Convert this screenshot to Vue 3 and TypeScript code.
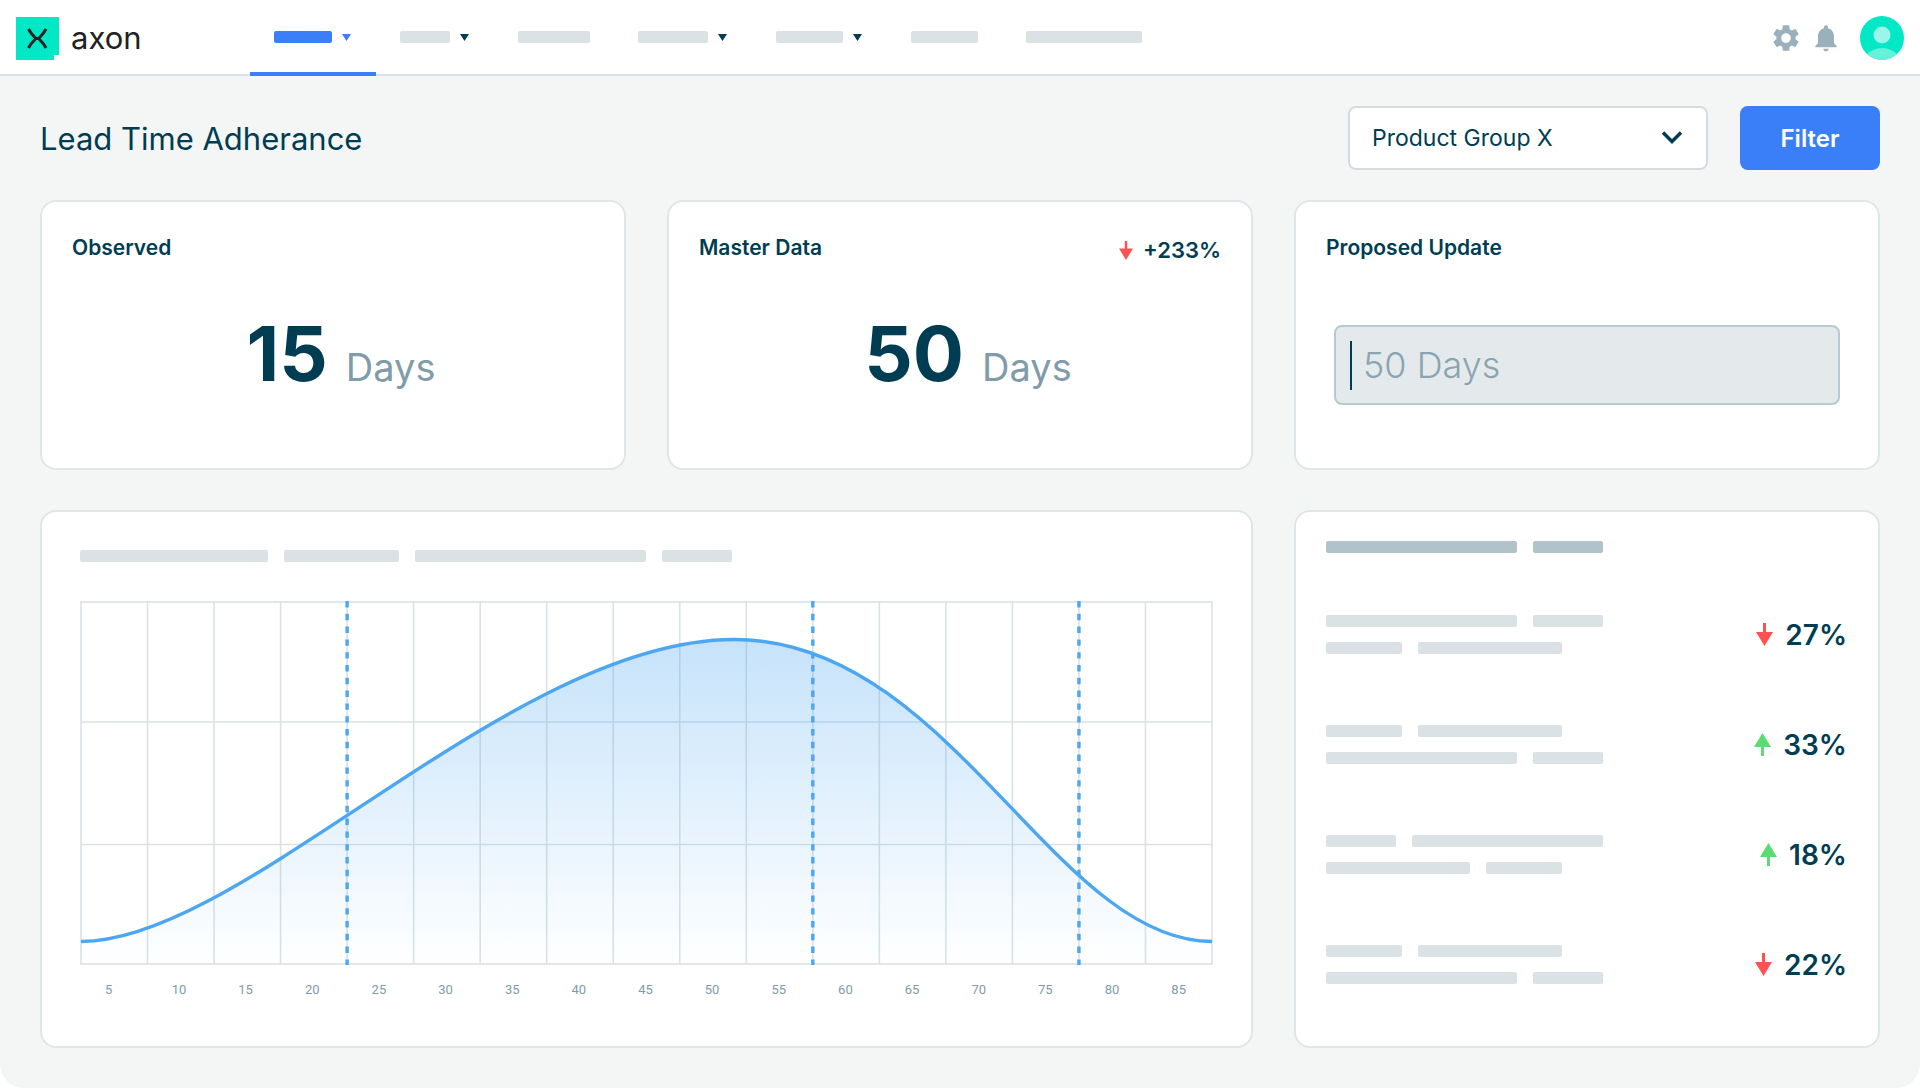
<script setup lang="ts">
import { ref } from 'vue'

interface NavItem {
  label: string
  width: number
  menu: boolean
  active?: boolean
}

interface ChangeRow {
  lines: number[][]
  direction: 'up' | 'down'
  value: string
}

const navItems: NavItem[] = [
  { label: 'Overview', width: 58, menu: true, active: true },
  { label: 'Plans', width: 50, menu: true },
  { label: 'Reports', width: 72, menu: false },
  { label: 'Materials', width: 70, menu: true },
  { label: 'Suppliers', width: 67, menu: true },
  { label: 'Orders', width: 67, menu: false },
  { label: 'Administration', width: 116, menu: false },
]

const changes: ChangeRow[] = [
  { lines: [[191, 70], [76, 144]], direction: 'down', value: '27%' },
  { lines: [[76, 144], [191, 70]], direction: 'up', value: '33%' },
  { lines: [[70, 191], [144, 76]], direction: 'up', value: '18%' },
  { lines: [[76, 144], [191, 70]], direction: 'down', value: '22%' },
]

const group = ref('Product Group X')
const proposed = ref('')

const chartTitle = [188, 115, 231, 70]
const columns = 17
const columnStep = 1131 / columns
const gridX = Array.from({ length: columns - 1 }, (_, i) => 1 + (i + 1) * columnStep)
const gridY = [121, 243.5]
const markers = [4, 11, 15].map((n) => 1 + n * columnStep)
const axisLabels = Array.from({ length: columns }, (_, i) => (i + 1) * 5)

const curve = 'M1 340.5C164 340.5 431 38.500 654 38.500C870 38.500 974 340.500 1132 340.500'
const area = `${curve}V363H1Z`

const arrowPaths = {
  down: 'M7 0h3v9h7L8.500 23 0 9h7z',
  up: 'M8.500 0 17 14h-7v9H7v-9H0z',
}
</script>

<template>
  <div class="page">
    <header class="topbar">
      <a class="brand" href="#">
        <svg class="brand-mark" width="43" height="43" viewBox="0 0 43 43" aria-hidden="true">
          <path fill="#00e8c6" d="M0 0h43v38h-5v5H0z" />
          <path
            fill="none"
            stroke="#222"
            stroke-width="3"
            d="M12.500 12c4 7.500 7 8 7 9.500s-3 2-7 9.500M30 12c-4 7.500-7 8-7 9.500s3 2 7 9.500M19.500 21.500H23"
          />
        </svg>
        <span class="brand-name">axon</span>
      </a>
      <nav class="nav" aria-label="Main">
        <a
          v-for="item in navItems"
          :key="item.label"
          href="#"
          class="nav-item"
          :class="{ active: item.active }"
          :aria-label="item.label"
        >
          <span class="bar" :style="{ width: item.width + 'px' }"></span>
          <svg v-if="item.menu" width="10" height="7" viewBox="0 0 10 7" aria-hidden="true">
            <path d="M0 0h9L4.500 7z" fill="currentColor" />
          </svg>
        </a>
      </nav>
      <div class="tools">
        <button type="button" class="icon-button" aria-label="Settings">
          <svg width="32" height="32" viewBox="0 0 24 24" aria-hidden="true">
            <path
              fill="currentColor"
              d="M19.140 12.940c.04-.3.06-.61.06-.94 0-.32-.02-.64-.07-.94l2.030-1.580c.18-.14.23-.41.12-.61l-1.920-3.320c-.12-.22-.37-.29-.59-.22l-2.390.96c-.5-.38-1.030-.7-1.620-.94l-.36-2.540c-.04-.24-.24-.41-.48-.41h-3.840c-.24 0-.43.17-.47.41l-.36 2.540c-.59.24-1.130.57-1.620.94l-2.390-.96c-.22-.08-.47 0-.59.22L2.740 8.870c-.12.21-.08.47.12.61l2.030 1.580c-.05.3-.09.63-.09.94s.02.64.07.94l-2.030 1.580c-.18.14-.23.41-.12.61l1.920 3.320c.12.22.37.29.59.22l2.390-.96c.5.38 1.030.7 1.620.94l.36 2.540c.05.24.24.41.48.41h3.840c.24 0 .44-.17.47-.41l.36-2.540c.59-.24 1.130-.56 1.620-.94l2.390.96c.22.08.47 0 .59-.22l1.920-3.320c.12-.22.07-.47-.12-.61l-2.010-1.580zM12 15.600c-1.980 0-3.600-1.620-3.600-3.600s1.620-3.600 3.600-3.600 3.600 1.620 3.600 3.600-1.620 3.600-3.600 3.600z"
            />
          </svg>
        </button>
        <button type="button" class="icon-button" aria-label="Notifications">
          <svg width="32" height="32" viewBox="0 0 24 24" aria-hidden="true">
            <path
              fill="currentColor"
              d="M12 22c1.100 0 2-.9 2-2h-4c0 1.100.89 2 2 2zm6-6v-5c0-3.070-1.640-5.640-4.500-6.320V4c0-.83-.67-1.500-1.500-1.500s-1.500.67-1.500 1.500v.68C7.630 5.360 6 7.920 6 11v5l-2 2v1h16v-1l-2-2z"
            />
          </svg>
        </button>
        <button type="button" class="avatar" aria-label="Account">
          <svg width="44" height="44" viewBox="0 0 44 44" aria-hidden="true">
            <clipPath id="avatar-clip"><circle cx="22" cy="22" r="22" /></clipPath>
            <g clip-path="url(#avatar-clip)">
              <path fill="#00e8c6" d="M0 0h44v44H0z" />
              <circle cx="22" cy="19" r="8.500" fill="#99f6e8" />
              <circle cx="22" cy="54" r="22" fill="#66f1dc" />
            </g>
          </svg>
        </button>
      </div>
    </header>

    <main class="content">
      <div class="toolbar">
        <h1 class="title">Lead Time Adherance</h1>
        <div class="select-wrap">
          <select v-model="group" class="select" aria-label="Product group">
            <option>Product Group X</option>
          </select>
          <svg class="chevron" width="22" height="14" viewBox="0 0 22 14" aria-hidden="true">
            <path d="M2 1.500l9 9 9-9" fill="none" stroke="currentColor" stroke-width="3.500" />
          </svg>
        </div>
        <button type="button" class="filter">Filter</button>
      </div>

      <div class="cards">
        <section class="card stat">
          <div class="card-head"><h2 class="card-title">Observed</h2></div>
          <p class="reading"><strong>15</strong><span>Days</span></p>
        </section>

        <section class="card stat">
          <div class="card-head">
            <h2 class="card-title">Master Data</h2>
            <span class="delta">
              <svg width="14" height="19" viewBox="0 0 17 23" aria-hidden="true">
                <path class="down" :d="arrowPaths.down" />
              </svg>
              +233%
            </span>
          </div>
          <p class="reading"><strong>50</strong><span>Days</span></p>
        </section>

        <section class="card stat">
          <div class="card-head">
            <h2 class="card-title"><label for="proposed">Proposed Update</label></h2>
          </div>
          <div class="field">
            <span class="cursor"></span>
            <input id="proposed" v-model="proposed" type="text" placeholder="50 Days" />
          </div>
        </section>

        <section class="card chart-card">
          <div class="bars">
            <span v-for="(w, i) in chartTitle" :key="i" class="bar" :style="{ width: w + 'px' }"></span>
          </div>
          <svg class="chart" viewBox="0 0 1133 364" role="img" aria-label="Lead time distribution">
            <defs>
              <linearGradient id="area-fill" x1="0" y1="0" x2="0" y2="1">
                <stop offset="0" stop-color="#4da6f0" stop-opacity="0.32" />
                <stop offset="1" stop-color="#4da6f0" stop-opacity="0" />
              </linearGradient>
            </defs>
            <g class="grid">
              <rect x="1" y="1" width="1131" height="362" />
              <line v-for="x in gridX" :key="x" :x1="x" :x2="x" y1="1" y2="363" />
              <line v-for="y in gridY" :key="y" x1="1" x2="1132" :y1="y" :y2="y" />
            </g>
            <path :d="area" fill="url(#area-fill)" />
            <line v-for="x in markers" :key="x" class="marker" :x1="x" :x2="x" y1="0" y2="364" />
            <path :d="curve" class="curve" />
          </svg>
          <div class="axis">
            <span v-for="n in axisLabels" :key="n">{{ n }}</span>
          </div>
        </section>

        <section class="card list-card">
          <div class="bars strong">
            <span class="bar" style="width: 191px"></span>
            <span class="bar" style="width: 70px"></span>
          </div>
          <ul class="changes">
            <li v-for="(row, i) in changes" :key="i" class="change">
              <div class="lines">
                <div v-for="(line, j) in row.lines" :key="j" class="bars">
                  <span v-for="(w, k) in line" :key="k" class="bar" :style="{ width: w + 'px' }"></span>
                </div>
              </div>
              <span class="percent">
                <svg width="17" height="23" viewBox="0 0 17 23" aria-hidden="true">
                  <path :class="row.direction" :d="arrowPaths[row.direction]" />
                </svg>
                {{ row.value }}
              </span>
            </li>
          </ul>
        </section>
      </div>
    </main>
  </div>
</template>

<style>
body {
  margin: 0;
  background: #fff;
}
</style>

<style scoped>
.page {
  box-sizing: border-box;
  min-height: 100vh;
  display: flex;
  flex-direction: column;
  background: #f4f6f6;
  border-radius: 0 0 24px 24px;
  color: #003d52;
  font-family: Inter, "Liberation Sans", sans-serif;
}

button,
select,
input {
  font-family: inherit;
  color: inherit;
}

.topbar {
  box-sizing: border-box;
  height: 76px;
  display: flex;
  align-items: stretch;
  padding: 2px 16px 0;
  background: #fff;
  border-bottom: 2px solid #dae2e5;
}

.brand {
  width: 234px;
  display: flex;
  align-items: center;
  gap: 12px;
  color: #222;
  text-decoration: none;
}

.brand-name {
  font-size: 31px;
  line-height: 40px;
}

.nav {
  display: flex;
}

.nav-item {
  display: flex;
  align-items: center;
  gap: 10px;
  padding: 0 24px;
  margin-bottom: -2px;
  color: #003d52;
  border-bottom: 4px solid transparent;
}

.nav-item.active {
  color: #3a7ef8;
  border-bottom-color: #3a7ef8;
}

.nav-item.active .bar {
  background: #3a7ef8;
}

.bar {
  display: block;
  height: 12px;
  border-radius: 2px;
  background: #dae2e5;
}

.bars {
  display: flex;
  gap: 16px;
}

.bars.strong .bar {
  background: #b1c3ca;
}

.tools {
  display: flex;
  align-items: center;
  gap: 8px;
  margin-left: auto;
}

.icon-button,
.avatar {
  display: flex;
  padding: 0;
  border: 0;
  background: none;
  color: #9ab0ba;
}

.avatar {
  margin-left: 10px;
}

.content {
  flex: 1;
  display: flex;
  flex-direction: column;
  gap: 30px;
  padding: 30px 40px 40px;
}

.toolbar {
  display: flex;
  align-items: center;
  gap: 32px;
}

.title {
  flex: 1;
  margin: 0;
  padding-top: 2px;
  font-size: 31px;
  line-height: 40px;
  font-weight: 400;
}

.select-wrap {
  position: relative;
  width: 360px;
}

.select {
  box-sizing: border-box;
  width: 100%;
  height: 64px;
  padding: 0 56px 0 22px;
  appearance: none;
  background: #fff;
  border: 2px solid #d3dde1;
  border-radius: 8px;
  font-size: 23px;
}

.chevron {
  position: absolute;
  top: 25px;
  right: 25px;
  pointer-events: none;
}

.filter {
  width: 140px;
  height: 64px;
  border: 0;
  border-radius: 8px;
  background: #3a7ef8;
  color: #fff;
  font-size: 24px;
  font-weight: 600;
}

.cards {
  flex: 1;
  display: grid;
  grid-template-columns: repeat(3, minmax(0, 1fr));
  grid-template-rows: auto 1fr;
  gap: 40px 41px;
}

.card {
  box-sizing: border-box;
  background: #fff;
  border: 2px solid #dfe6e9;
  border-radius: 16px;
}

.stat {
  min-height: 270px;
  padding: 34px 30px;
}

.card-head {
  min-height: 28px;
  display: flex;
  align-items: flex-start;
  justify-content: space-between;
}

.card-title {
  margin: 0;
  font-size: 21px;
  line-height: 24px;
  font-weight: 600;
}

.delta {
  display: flex;
  align-items: center;
  gap: 10px;
  font-size: 22px;
  line-height: 28px;
  font-weight: 600;
}

.down {
  fill: #ff5252;
}

.up {
  fill: #5bdb73;
}

.reading {
  display: flex;
  align-items: baseline;
  justify-content: center;
  gap: 18px;
  margin: 40px 0 0;
  padding-left: 16px;
  line-height: 98px;
}

.reading strong {
  font-size: 76px;
  font-weight: 700;
}

.reading span {
  font-size: 38px;
  font-weight: 400;
  color: #7f9ca8;
}

.field {
  box-sizing: border-box;
  height: 80px;
  display: flex;
  align-items: center;
  gap: 11px;
  margin: 61px 8px 0;
  padding: 0 14px;
  background: #e4eaec;
  border: 2px solid #b8c9cf;
  border-radius: 8px;
}

.cursor {
  width: 2px;
  height: 49px;
  background: #003d52;
}

.field input {
  flex: 1;
  min-width: 0;
  height: 60px;
  padding: 0;
  border: 0;
  outline: 0;
  background: none;
  font-size: 36px;
  font-weight: 300;
}

.field input::placeholder {
  color: #8aa5af;
  opacity: 1;
}

.chart-card {
  grid-column: span 2;
  padding: 38px;
}

.chart {
  display: block;
  width: 100%;
  height: auto;
  margin-top: 39px;
}

.grid {
  fill: none;
  stroke: #dae2e5;
  stroke-width: 1.6;
}

.curve {
  fill: none;
  stroke: #4da6f0;
  stroke-width: 3.4;
}

.marker {
  stroke: #4da6f0;
  stroke-width: 3.4;
  stroke-dasharray: 6.4;
}

.axis {
  display: grid;
  grid-template-columns: repeat(17, minmax(0, 1fr));
  margin-top: 15px;
  font-family: Roboto, "Liberation Sans", sans-serif;
  font-size: 13px;
  line-height: 20px;
  color: #7f9ca8;
}

.axis span {
  padding-left: 25px;
}

.list-card {
  padding: 29px 31px 40px 30px;
}

.changes {
  display: flex;
  flex-direction: column;
  gap: 71px;
  margin: 62px 0 0;
  padding: 0;
  list-style: none;
}

.change {
  display: flex;
  align-items: center;
  justify-content: space-between;
}

.lines {
  display: flex;
  flex-direction: column;
  gap: 15px;
}

.percent {
  display: flex;
  align-items: center;
  gap: 12px;
  font-size: 28px;
  line-height: 36px;
  font-weight: 600;
}
</style>
